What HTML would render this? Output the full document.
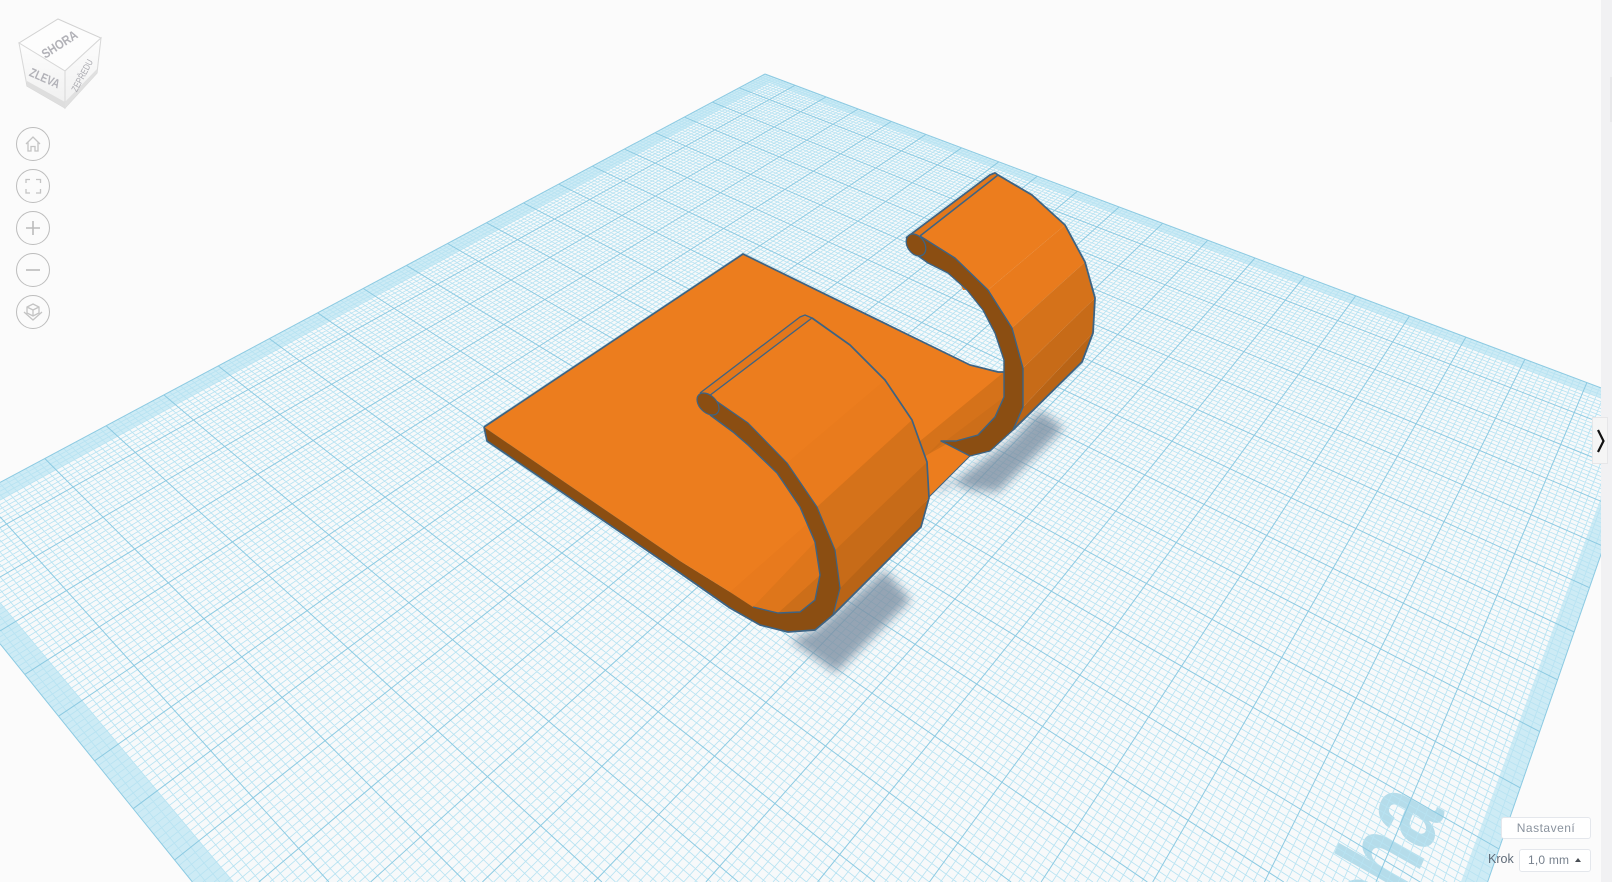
<!DOCTYPE html>
<html>
<head>
<meta charset="utf-8">
<style>
html,body{margin:0;padding:0;width:1612px;height:882px;overflow:hidden;background:#fbfbfb;font-family:"Liberation Sans",sans-serif}
#w{position:absolute;left:0;top:0;width:1612px;height:882px;overflow:hidden}
svg{position:absolute;left:0;top:0}
.btn{position:absolute;background:#fff;border:1px solid #e4e7ec;border-radius:3px;box-sizing:border-box;color:#8a939e;font-size:12px;text-align:center;letter-spacing:.5px}
</style>
</head>
<body>
<div id="w">
<svg id="s" width="1612" height="882" viewBox="0 0 1612 882" xmlns="http://www.w3.org/2000/svg">
<defs>
<filter id="b" x="-30%" y="-30%" width="160%" height="160%"><feGaussianBlur stdDeviation="5"/></filter>
<linearGradient id="cl" x1="0" y1="0" x2="0" y2="1"><stop offset="0" stop-color="#fdfdfd"/><stop offset="1" stop-color="#efefef"/></linearGradient>
</defs>
<polygon id="plate" fill="#f7f9fa" points="0,0"/>
<g id="band"></g>
<text font-family="'Liberation Sans',sans-serif" font-weight="bold" font-size="128" text-anchor="end" fill="#b5dcea" transform="matrix(0.26,-0.59,0.8,0.45,1445,812)">plocha</text>
<g id="grid" fill="none"></g>

<!-- shadows -->
<g filter="url(#b)" fill="#7d90a3" opacity=".8">
<polygon points="815,630 885,570 911,600 836,673 790,640"/>
<polygon points="1012,440 1040,410 1064,428 998,492 970,490 945,480 935,495"/>
</g>

<!-- base -->
<polygon fill="#ec7d1e" points="484,427 743,254 970,365 998,372 1004,372 1004,397 970,456 929,497 833,615 778,613 753,607 730,592 680,561"/>
<!-- under second hook bands -->
<polygon fill="#d5721a" points="1004,372 1004,397 995,417 927,455 900,477 900,457 925,437"/>
<polygon fill="#cd6e19" points="1004,397 995,417 978,435 956,441 941,441 927,455"/>
<path d="M484,427 L743,254 L970,365 L998,372 L1004,372" fill="none" stroke="#3d6383" stroke-width="1.7"/>
<path d="M970,456 L929,497" fill="none" stroke="#3d6383" stroke-width="1"/>

<!-- right hook sheet -->
<polygon fill="#ec7d1e" points="920,235 998,175 1032,195 1065,225 988,290 963,290 950,260"/>
<polygon fill="#e97b1d" points="1065,225 1085,262 1012,328 988,290"/>
<polygon fill="#d5721a" points="1085,262 1095,298 1023,368 1012,328"/>
<polygon fill="#c76b18" points="1095,298 1093,333 1023,407 1023,368"/>
<polygon fill="#b96416" points="1093,333 1082,362 1013,430 1023,407"/>
<!-- right hook dark strip -->
<polygon fill="#8b4e12" points="920,236 955,258 988,290 1012,328 1023,368 1023,407 1013,430 990,451 970,456 941,441 956,441 978,435 995,417 1004,397 1004,360 995,333 983,310 967,290 948,273 928,263 910,250"/>
<path d="M920,236 L955,258 L988,290 L1012,328 L1023,368 L1023,407 L1013,430 L990,451 L970,456 L941,441 L956,441 L978,435 L995,417 L1004,397 L1004,360 L995,333 L983,310 L967,290 L948,273 L928,263 L910,250" fill="none" stroke="#3d6383" stroke-width="1.4" stroke-linejoin="round"/>
<path d="M906,238 L990,175 L995,173 L998,175 L1032,195 L1065,225 L1085,262 L1095,298 L1093,333 L1082,362 L1013,430" fill="none" stroke="#3d6383" stroke-width="1.8" stroke-linejoin="round"/>
<!-- ridge -->
<polygon fill="#e2771c" points="906,238 990,175 995,173 998,175 920,236"/>
<path d="M906,238 L990,175 L995,173 L998,175 L920,236" fill="none" stroke="#3d6383" stroke-width="1.5" stroke-linejoin="round"/>
<ellipse cx="916" cy="245" rx="12" ry="8.500" transform="rotate(55 916 245)" fill="#8b4e12" stroke="#3d6383" stroke-width="1.3"/>

<!-- left hook sheet -->
<polygon fill="#ec7d1e" points="709,396 812,318 850,345 885,380 787,463 748,423 717,402"/>
<polygon fill="#e97b1d" points="885,380 912,420 817,507 787,463"/>
<polygon fill="#d5721a" points="912,420 927,462 835,550 817,507"/>
<polygon fill="#c76b18" points="927,462 929,498 840,588 835,550"/>
<polygon fill="#b96416" points="929,498 921,527 833,615 840,588"/>
<!-- inner base bands -->
<polygon fill="#e87a1d" points="730,592 753,607 815,542 808,523"/>
<polygon fill="#de761b" points="753,607 778,613 820,575 815,542"/>
<polygon fill="#cc6e19" points="778,613 800,612 815,600 820,575"/>
<!-- left strip -->
<polygon fill="#8b4e12" points="484,427 680,561 730,592 753,607 778,613 800,612 815,600 820,575 815,542 800,507 777,473 748,445 733,432 710,415 702,409 717,402 748,423 787,463 817,507 835,550 840,588 833,615 815,630 788,632 760,625 730,608 680,573 487,441"/>
<path d="M710,415 L733,432 L748,445 L777,473 L800,507 L815,542 L820,575 L815,600 L800,612 L778,613 L753,607" fill="none" stroke="#3d6383" stroke-width="1.4" stroke-linejoin="round"/>
<path d="M484,427 L487,441 L680,573 L730,608 L760,625 L788,632 L815,630 L833,615 L921,527 L929,498 L927,462 L912,420 L885,380 L850,345 L812,318" fill="none" stroke="#3d6383" stroke-width="1.7" stroke-linejoin="round"/>
<path d="M709,396 L748,423 L787,463 L817,507 L835,550 L840,588 L833,615" fill="none" stroke="#3d6383" stroke-width="1.2" stroke-linejoin="round"/>
<polygon fill="#e2771c" points="700,393 800,317 805,315 812,318 709,396"/>
<path d="M700,393 L800,317 L805,315 L812,318 L709,396" fill="none" stroke="#3d6383" stroke-width="1.3" stroke-linejoin="round"/>
<ellipse cx="708" cy="404" rx="13" ry="8.500" transform="rotate(45 708 404)" fill="#8b4e12" stroke="#3d6383" stroke-width="1.2"/>

<!-- right strip of UI -->
<rect x="1601" y="0" width="11" height="882" fill="#f1f1f3"/>
<rect x="1610" y="77" width="2" height="45" fill="#e8e8ea"/>
<rect x="1592.500" y="417.500" width="15" height="46" fill="#f5f5f5" stroke="#e6e6e8"/>
<path d="M1598,430 L1603.500,441 L1598,452" fill="none" stroke="#111" stroke-width="2.200"/>

<!-- view cube -->
<polygon points="58,19 101,38 65,71 19,43" fill="#fdfdfd" stroke="#d2d2d2"/>
<polygon points="19,43 65,71 65,108 27,86" fill="url(#cl)" stroke="#d8d8d8"/>
<polygon points="65,71 101,38 97,73 65,108" fill="url(#cl)" stroke="#d8d8d8"/>
<polygon points="27,81 65,102 65,108 27,86" fill="#dedede"/>
<polygon points="65,102 97,69 97,73 65,108" fill="#e0e0e0"/>
<text x="0" y="0" font-size="13" font-weight="bold" fill="#b2b2b8" text-anchor="middle" textLength="40" lengthAdjust="spacingAndGlyphs" transform="translate(62,48) rotate(-33)">SHORA</text>
<text x="0" y="0" font-size="12.500" font-weight="bold" fill="#b2b2b8" text-anchor="middle" textLength="32" lengthAdjust="spacingAndGlyphs" transform="translate(43,82) rotate(24)">ZLEVA</text>
<text x="0" y="0" font-size="9.500" fill="#aaaab0" text-anchor="middle" textLength="35" lengthAdjust="spacingAndGlyphs" transform="translate(85,77) rotate(-62)">ZEPŘEDU</text>

<!-- nav buttons -->
<g fill="#fbfbfb" stroke="#bdbdbd" stroke-width="1">
<circle cx="33" cy="144" r="16.500"/><circle cx="33" cy="186" r="16.500"/><circle cx="33" cy="228" r="16.500"/><circle cx="33" cy="270" r="16.500"/><circle cx="33" cy="312" r="16.500"/>
</g>
<g fill="none" stroke="#c4c4c4" stroke-width="1.300">
<path d="M26,144 L33,137 L40,144 M28,142.500 V151 H31 V146.500 H35 V151 H38 V142.500"/>
<path d="M26,183 V179.500 H30 M36,179.500 H40.500 V183 M40.500,189 V193 H36 M30,193 H26 V189"/>
<path d="M26,228 H40 M33,221 V235" stroke-width="1.600" stroke="#bbb"/>
<path d="M26,270 H40" stroke-width="1.600" stroke="#bbb"/>
<path d="M33,304 L39,307 V313 L33,316 L27,313 V307Z M27,307 L33,310 L39,307 M33,310 V316 M24,312 L33,320 L42,312"/>
</g>
</svg>

<div class="btn" style="left:1501px;top:817px;width:90px;height:22px;line-height:20px">Nastavení</div>
<div style="position:absolute;left:1488px;top:851px;font-size:12.500px;line-height:16px;color:#5f6b78">Krok</div>
<div class="btn" style="left:1519px;top:849px;width:72px;height:23px;line-height:21px;color:#77818d;text-align:left;padding-left:8px;letter-spacing:.2px">1,0 mm</div>
<div style="position:absolute;left:1575px;top:858px;width:0;height:0;border-left:3px solid transparent;border-right:3px solid transparent;border-bottom:4px solid #4a4f55"></div>
</div>

<script>
(function(){
var P=[[765,74],[1652,407],[1099,2005],[-91,531]];
var x0=P[0][0],y0=P[0][1],x1=P[1][0],y1=P[1][1],x2=P[2][0],y2=P[2][1],x3=P[3][0],y3=P[3][1];
var sx=x0-x1+x2-x3,sy=y0-y1+y2-y3,dx1=x1-x2,dx2=x3-x2,dy1=y1-y2,dy2=y3-y2;
var det=dx1*dy2-dx2*dy1;
var g=(sx*dy2-dx2*sy)/det,h=(dx1*sy-sx*dy1)/det;
var a=x1-x0+g*x1,b=x3-x0+h*x3,c=x0,d=y1-y0+g*y1,e=y3-y0+h*y3,f=y0;
function m(u,v){var w=g*u+h*v+1;return [(a*u+b*v+c)/w,(d*u+e*v+f)/w];}
var W=1612,H=882;
function clipPoly(pts){
  var planes=[[1,0,0],[-1,0,W],[0,1,0],[0,-1,H]];
  planes.forEach(function(p){
    var out=[];
    for(var i=0;i<pts.length;i++){
      var A=pts[i],B=pts[(i+1)%pts.length];
      var da=p[0]*A[0]+p[1]*A[1]+p[2],db=p[0]*B[0]+p[1]*B[1]+p[2];
      if(da>=0)out.push(A);
      if((da>=0)!=(db>=0)){var t=da/(da-db);out.push([A[0]+t*(B[0]-A[0]),A[1]+t*(B[1]-A[1])]);}
    }
    pts=out;
  });
  return pts;
}
function str(pts){return pts.map(function(q){return q[0].toFixed(1)+","+q[1].toFixed(1);}).join(" ");}
function line(A,B){
  var t0=0,t1=1,dx=B[0]-A[0],dy=B[1]-A[1];
  var ps=[-dx,dx,-dy,dy],qs=[A[0],W-A[0],A[1],H-A[1]];
  for(var i=0;i<4;i++){
    if(ps[i]==0){if(qs[i]<0)return "";continue;}
    var r=qs[i]/ps[i];
    if(ps[i]<0){if(r>t1)return "";if(r>t0)t0=r;}
    else{if(r<t0)return "";if(r<t1)t1=r;}
  }
  return "M"+(A[0]+t0*dx).toFixed(1)+","+(A[1]+t0*dy).toFixed(1)+"L"+(A[0]+t1*dx).toFixed(1)+","+(A[1]+t1*dy).toFixed(1);
}
document.getElementById("plate").setAttribute("points",str(clipPoly([m(0,0),m(1,0),m(1,1),m(0,1)])));
var tA=0.015,tR=0.012,tF=0.015,tL=0.02;
var quads=[
 [m(0,0),m(1,0),m(1,tA),m(0,tA)],
 [m(1-tR,tA),m(1,tA),m(1,1),m(1-tR,1)],
 [m(0,1-tF),m(1-tR,1-tF),m(1-tR,1),m(0,1)],
 [m(0,tA),m(tL,tA),m(tL,1-tF),m(0,1-tF)]
];
var hb="";
quads.forEach(function(q){var c=clipPoly(q);if(c.length>2)hb+='<polygon fill="#cdebf5" points="'+str(c)+'"/>';});
document.getElementById("band").innerHTML=hb;
var minor="",major="";
for(var i=0;i<=200;i++){
  var k=i/200;
  var s=line(m(k,0),m(k,1))+line(m(0,k),m(1,k));
  if(i%10==0)major+=s;else minor+=s;
}
document.getElementById("grid").innerHTML=
 '<path d="'+minor+'" stroke="#b8e3f2" stroke-width=".85"/>'+
 '<path d="'+major+'" stroke="#8ccae2" stroke-width="1"/>';
})();
</script>
</body>
</html>
